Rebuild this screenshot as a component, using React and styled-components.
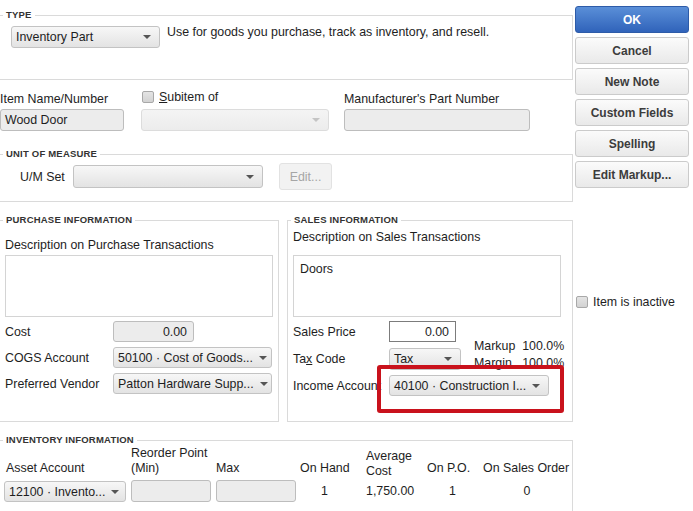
import styled, { createGlobalStyle } from "styled-components";

const GlobalStyle = createGlobalStyle`
    html, body {
        margin: 0;
        padding: 0;
        background: #fff;
    }
`;

const Page = styled.div`
    position: relative;
    display: flex;
    width: 693px;
    height: 511px;
    overflow: hidden;
    background: #fff;
    font-family: "Liberation Sans", Arial, sans-serif;
    font-size: 12.4px;
    color: #1e1e1e;
`;

const Main = styled.div`
    width: 573px;
    flex: none;
    display: flex;
    flex-direction: column;
`;

const Side = styled.div`
    width: 114px;
    margin-left: 2px;
    padding-top: 6px;
    display: flex;
    flex-direction: column;
    gap: 4px;
`;

const Group = styled.section`
    box-sizing: border-box;
    margin-top: ${({ $top }) => $top}px;
    height: ${({ $h }) => $h}px;
    width: ${({ $w }) => ($w ? `${$w}px` : "auto")};
    flex: ${({ $grow }) => ($grow ? "1" : "none")};
    border: 1px solid #dadada;
    border-left: ${({ $left }) => ($left ? "1px solid #dadada" : "none")};
`;

const Legend = styled.h3`
    display: table;
    margin: -7px 0 0 3px;
    padding: 0 3px;
    background: #fff;
    font-size: 9.5px;
    line-height: 12px;
    font-weight: bold;
    letter-spacing: 0.2px;
    color: #333;
`;

const Body = styled.div`
    padding: ${({ $pad }) => $pad};
`;

const TypeRow = styled.div`
    display: flex;
    align-items: flex-start;
    gap: 7px;
`;

const Hint = styled.div`
    margin-top: -1px;
    line-height: 14px;
`;

const Select = styled.div`
    box-sizing: border-box;
    width: ${({ $w }) => $w}px;
    height: ${({ $h }) => $h || 22}px;
    display: flex;
    align-items: center;
    justify-content: space-between;
    padding: 0 8px 0 4px;
    border: 1px solid ${({ $off }) => ($off ? "#dcdcdc" : "#c3c3c3")};
    border-radius: 3px;
    background: ${({ $off }) =>
        $off ? "linear-gradient(#f4f4f4, #ececec)" : "linear-gradient(#f7f7f7, #e3e3e3)"};
    white-space: nowrap;
    overflow: hidden;
    flex: none;
`;

const Caret = styled.span`
    flex: none;
    width: 0;
    height: 0;
    margin-left: 6px;
    border-left: 4px solid transparent;
    border-right: 4px solid transparent;
    border-top: 4px solid ${({ $light }) => ($light ? "#c4c4c4" : "#555")};
`;

const Field = styled.div`
    box-sizing: border-box;
    width: ${({ $w }) => $w}px;
    height: ${({ $h }) => $h || 22}px;
    display: flex;
    align-items: center;
    justify-content: ${({ $right }) => ($right ? "flex-end" : "flex-start")};
    padding: 0 6px 0 4px;
    border: 1px solid ${({ $white }) => ($white ? "#7c7c7c" : "#bdbdbd")};
    border-radius: ${({ $white }) => ($white ? "0" : "3px")};
    background: ${({ $white }) => ($white ? "#fff" : "#ececec")};
    flex: none;
`;

const ItemRow = styled.div`
    display: flex;
    margin-top: 11px;
`;

const ItemCol = styled.div`
    display: flex;
    flex-direction: column;
    margin-left: ${({ $ml }) => $ml || 0}px;
`;

const ItemLabel = styled.div`
    height: 18px;
    display: flex;
    align-items: flex-start;
    gap: 5px;
    line-height: 13px;
    padding-top: ${({ $pt }) => $pt || 0}px;
    padding-left: ${({ $pl }) => $pl || 0}px;
    box-sizing: border-box;
`;

const Check = styled.span`
    box-sizing: border-box;
    width: 12px;
    height: 12px;
    border: 1px solid #a8a8a8;
    border-radius: 2px;
    background: linear-gradient(#e4e4e4, #d2d2d2);
    flex: none;
`;

const Key = styled.u`
    text-decoration: underline;
    text-underline-offset: 1px;
`;

const UomRow = styled.div`
    display: flex;
    align-items: center;
`;

const UomLabel = styled.span`
    width: 53px;
`;

const DisabledButton = styled.div`
    box-sizing: border-box;
    width: 53px;
    height: 27px;
    margin-left: 16px;
    display: flex;
    align-items: center;
    justify-content: center;
    border: 1px solid #e2e2e2;
    border-radius: 3px;
    background: #f2f2f2;
    color: #a6a6a6;
`;

const Split = styled.div`
    display: flex;
    margin-top: 18px;
    gap: 8px;
`;

const Caption = styled.div`
    line-height: 14px;
    margin: ${({ $m }) => $m};
    white-space: nowrap;
`;

const TextBox = styled.div`
    box-sizing: border-box;
    width: 268px;
    height: 62px;
    border: 1px solid #d4d4d4;
    background: #fff;
    padding: 6px 6px;
    line-height: 14px;
`;

const FormGrid = styled.div`
    display: grid;
    grid-template-columns: ${({ $cols }) => $cols};
    grid-template-rows: 21px 21px 21px;
    row-gap: ${({ $gap }) => $gap}px;
    align-items: center;
    margin-top: 4px;
    white-space: nowrap;
`;

const Markup = styled.div`
    grid-column: 3;
    grid-row: 1 / 3;
    align-self: start;
    margin-top: 17px;
    line-height: 17px;
`;

const Wide = styled.div`
    grid-column: 2 / 4;
    align-self: end;
`;

const InvGrid = styled.div`
    display: grid;
    grid-template-columns: 127px 85px 84px 66px 61px 56px 90px;
    row-gap: 4px;
    padding-left: 4px;
    align-items: end;
    white-space: nowrap;
`;

const Head = styled.div`
    line-height: 15px;
    padding-left: ${({ $pl }) => $pl || 0}px;
    margin-bottom: ${({ $mb }) => $mb || 0}px;
`;

const Value = styled.div`
    align-self: center;
    width: ${({ $w }) => ($w ? `${$w}px` : "auto")};
    text-align: ${({ $w }) => ($w ? "center" : "left")};
`;

const Button = styled.div`
    box-sizing: border-box;
    height: 27px;
    display: flex;
    align-items: center;
    justify-content: center;
    border-radius: 3px;
    font-size: 12px;
    font-weight: bold;
    border: 1px solid ${({ $primary }) => ($primary ? "#2d5ba8" : "#cbcbcb")};
    background: ${({ $primary }) =>
        $primary ? "linear-gradient(#5a8fd8, #3063ba)" : "linear-gradient(#fbfbfb, #e9e9e9)"};
    color: ${({ $primary }) => ($primary ? "#fff" : "#3c3c3c")};
`;

const Inactive = styled.div`
    display: flex;
    align-items: center;
    gap: 5px;
    margin-top: 103px;
    padding-left: 1px;
`;

const Highlight = styled.div`
    position: absolute;
    left: 377px;
    top: 365px;
    width: 187px;
    height: 48px;
    box-sizing: border-box;
    border: 4.5px solid #c9121c;
    border-radius: 3px;
    pointer-events: none;
`;

const buttons = ["Cancel", "New Note", "Custom Fields"];

export default function App() {
    return (
        <Page>
            <GlobalStyle />
            <Main>
                <Group $top={15} $h={65}>
                    <Legend>TYPE</Legend>
                    <Body $pad="5px 0 0 11px">
                        <TypeRow>
                            <Select $w={149}>
                                Inventory Part
                                <Caret />
                            </Select>
                            <Hint>Use for goods you purchase, track as inventory, and resell.</Hint>
                        </TypeRow>
                    </Body>
                </Group>

                <ItemRow>
                    <ItemCol>
                        <ItemLabel $pt={2}>Item Name/Number</ItemLabel>
                        <Field $w={124}>Wood Door</Field>
                    </ItemCol>
                    <ItemCol $ml={17}>
                        <ItemLabel $pl={1}>
                            <Check />
                            <span>
                                <Key>S</Key>ubitem of
                            </span>
                        </ItemLabel>
                        <Select $w={188} $off>
                            <span />
                            <Caret $light />
                        </Select>
                    </ItemCol>
                    <ItemCol $ml={15}>
                        <ItemLabel $pt={2}>Manufacturer's Part Number</ItemLabel>
                        <Field $w={186} />
                    </ItemCol>
                </ItemRow>

                <Group $top={23} $h={48}>
                    <Legend>UNIT OF MEASURE</Legend>
                    <Body $pad="3px 0 0 20px">
                        <UomRow>
                            <UomLabel>U/M Set</UomLabel>
                            <Select $w={190} $h={23}>
                                <span />
                                <Caret />
                            </Select>
                            <DisabledButton>Edit...</DisabledButton>
                        </UomRow>
                    </Body>
                </Group>

                <Split>
                    <Group $top={0} $h={202} $w={279}>
                        <Legend>PURCHASE INFORMATION</Legend>
                        <Body $pad="0 0 0 5px">
                            <Caption $m="12px 0 3px">Description on Purchase Transactions</Caption>
                            <TextBox />
                            <FormGrid $cols="108px auto" $gap={5}>
                                <span>Cost</span>
                                <Field $w={81} $h={21} $right>
                                    0.00
                                </Field>
                                <span>COGS Account</span>
                                <Select $w={159} $h={21}>
                                    50100 · Cost of Goods...
                                    <Caret />
                                </Select>
                                <span>Preferred Vendor</span>
                                <Select $w={159} $h={21}>
                                    Patton Hardware Supp...
                                    <Caret />
                                </Select>
                            </FormGrid>
                        </Body>
                    </Group>
                    <Group $top={0} $h={202} $left $grow>
                        <Legend>SALES INFORMATION</Legend>
                        <Body $pad="0 0 0 5px">
                            <Caption $m="4px 0 11px">Description on Sales Transactions</Caption>
                            <TextBox>Doors</TextBox>
                            <FormGrid $cols="96px 85px auto" $gap={6}>
                                <span>Sales Price</span>
                                <Field $w={67} $h={21} $right $white>
                                    0.00
                                </Field>
                                <Markup>
                                    Markup&nbsp; 100.0%
                                    <br />
                                    Margin&nbsp;&nbsp; 100.0%
                                </Markup>
                                <span>
                                    Ta<Key>x</Key> Code
                                </span>
                                <Select $w={72}>
                                    Tax
                                    <Caret />
                                </Select>
                                <span>Income Account</span>
                                <Wide>
                                    <Select $w={160} $h={21}>
                                        40100 · Construction I...
                                        <Caret />
                                    </Select>
                                </Wide>
                            </FormGrid>
                        </Body>
                    </Group>
                </Split>

                <Group $top={18} $h={120}>
                    <Legend>INVENTORY INFORMATION</Legend>
                    <InvGrid>
                        <Head $pl={2}>Asset Account</Head>
                        <Head>
                            Reorder Point
                            <br />
                            (Min)
                        </Head>
                        <Head>Max</Head>
                        <Head>On Hand</Head>
                        <Head $mb={-3}>
                            Average
                            <br />
                            Cost
                        </Head>
                        <Head>On P.O.</Head>
                        <Head>On Sales Order</Head>

                        <Select $w={122} $h={21}>
                            12100 · Invento...
                            <Caret />
                        </Select>
                        <Field $w={80} />
                        <Field $w={80} />
                        <Value $w={49}>1</Value>
                        <Value>1,750.00</Value>
                        <Value $w={51}>1</Value>
                        <Value $w={88}>0</Value>
                    </InvGrid>
                </Group>
            </Main>

            <Side>
                <Button $primary>OK</Button>
                {buttons.map((b) => (
                    <Button key={b}>{b}</Button>
                ))}
                <Button>
                    <span>
                        Spellin<Key>g</Key>
                    </span>
                </Button>
                <Button>Edit Markup...</Button>
                <Inactive>
                    <Check />
                    <span>Item is inactive</span>
                </Inactive>
            </Side>

            <Highlight />
        </Page>
    );
}
